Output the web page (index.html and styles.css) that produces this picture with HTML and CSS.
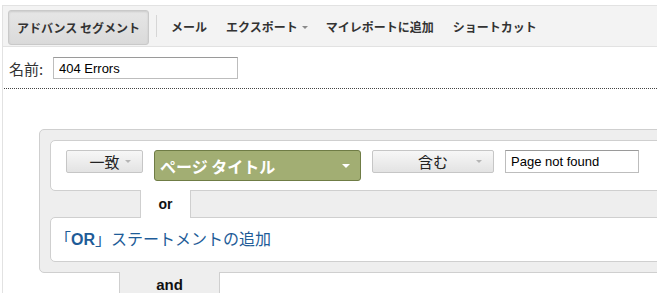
FILE: index.html
```
<!DOCTYPE html>
<html lang="ja">

<head>
  <meta charset="UTF-8">
  <meta name="viewport" content="width=device-width, initial-scale=1.0">
  <title>アドバンス セグメント</title>
  <link rel="stylesheet" href="styles.css">
</head>

<body>

  <div class="page">
    <div class="toolbar">
      <span class="toolbar__button">アドバンス セグメント</span>
      <span class="toolbar__sep"></span>
      <span class="toolbar__item">メール</span>
      <span class="toolbar__item">エクスポート<i class="arrow arrow_gray"></i></span>
      <span class="toolbar__item">マイレポートに追加</span>
      <span class="toolbar__item">ショートカット</span>
    </div>

    <div class="name">
      <label class="name__label" for="segment-name">名前:</label>
      <input class="field name__input" id="segment-name" type="text" value="404 Errors">
    </div>

    <div class="segment">
      <div class="segment__panel">
        <div class="statement">
          <span class="select select_match">
            <span class="select__text">一致</span>
            <i class="arrow arrow_light"></i>
          </span>
          <span class="dimension">
            <span>ページ タイトル</span>
            <i class="arrow arrow_white"></i>
          </span>
          <span class="select select_cond">
            <span class="select__text">含む</span>
            <i class="arrow arrow_light"></i>
          </span>
          <input class="field statement__value" type="text" value="Page not found">
        </div>

        <div class="joiner joiner_or">or</div>

        <div class="statement statement_add">
          <a class="add-link" href="#">「<b>OR</b>」ステートメントの追加</a>
        </div>
      </div>

      <div class="joiner joiner_and">and</div>
    </div>
  </div>

</body>

</html>
```

FILE: styles.css
```
html,
body {
  height: 100%;
}

body {
  margin: 0;
  overflow: hidden;
  background-color: #fff;
  font-family: "Noto Sans CJK JP", "Liberation Sans", sans-serif;
  color: #333;
}

.page {
  margin: 5px 0 0 2px;
  border-top: 1px solid #e2e2e2;
  border-left: 1px solid #e2e2e2;
  height: 287px;
  overflow: hidden;
}

/* toolbar */

.toolbar {
  display: flex;
  align-items: center;
  height: 40px;
  background-color: #f3f3f3;
  border-bottom: 1px solid #e2e2e2;
}

.toolbar__button {
  display: flex;
  align-items: center;
  justify-content: center;
  box-sizing: border-box;
  width: 141px;
  height: 35px;
  margin: 4px 0 0 5px;
  align-self: flex-start;
  border: 1px solid #c9c9c9;
  border-radius: 3px;
  background-image: linear-gradient(#e6e6e6, #dadada);
  box-shadow: inset 0 1px 2px rgba(0, 0, 0, 0.12);
  font-size: 12px;
  font-weight: bold;
  color: #333;
}

.toolbar__sep {
  width: 1px;
  height: 22px;
  margin: 0 14px 0 7px;
  background-color: #d6d6d6;
}

.toolbar__item {
  display: flex;
  align-items: center;
  gap: 4px;
  padding: 0 9px 0 0;
  margin-right: 10px;
  font-size: 12px;
  font-weight: bold;
  color: #333;
}

/* arrows */

.arrow {
  display: inline-block;
  width: 0;
  height: 0;
  border-left: 3px solid transparent;
  border-right: 3px solid transparent;
  border-top: 3px solid #999;
}

.arrow_gray {
  border-top-color: #8a8a8a;
  margin-top: 2px;
  margin-right: -1px;
}

.arrow_light {
  border-top-color: #b5b5b5;
}

.arrow_white {
  border-left-width: 4px;
  border-right-width: 4px;
  border-top: 4px solid #fff;
}

/* name */

.name {
  display: flex;
  align-items: center;
  padding: 10px 0 9px 9px;
  margin-left: -3px;
  border-bottom: 1px dotted #444;
}

.name__label {
  width: 44px;
  font-size: 15px;
  color: #333;
}

.field {
  box-sizing: border-box;
  height: 22px;
  margin: 0;
  padding: 0 5px;
  border: 1px solid #bdbdbd;
  border-top-color: #9a9a9a;
  font-family: "Liberation Sans", Arial, sans-serif;
  font-size: 13px;
  color: #000;
  background-color: #fff;
}

.name__input {
  width: 185px;
}

/* segment builder */

.segment {
  width: 640px;
  margin: 40px 0 0 36px;
}

.segment__panel {
  padding: 10px 0 10px 10px;
  background-color: #eee;
  border: 1px solid #cfcfcf;
  border-radius: 5px;
}

.statement {
  display: flex;
  align-items: flex-start;
  gap: 11px;
  padding: 9px 15px;
  background-color: #fff;
  border: 1px solid #cfcfcf;
  border-radius: 5px;
}

.select {
  display: grid;
  grid-template-columns: 1fr auto 1fr;
  align-items: center;
  box-sizing: border-box;
  height: 23px;
  border: 1px solid #c6c6c6;
  border-radius: 2px;
  background-image: linear-gradient(#f7f7f7, #e3e3e3);
  font-size: 15px;
  color: #222;
}

.select .select__text {
  grid-column: 2;
}

.select .arrow {
  grid-column: 3;
  justify-self: end;
  margin-right: 11px;
}

.select_match {
  width: 77px;
}

.select_cond {
  width: 122px;
}

.dimension {
  display: flex;
  align-items: center;
  justify-content: space-between;
  box-sizing: border-box;
  width: 207px;
  height: 31px;
  padding: 0 10px 0 5px;
  border: 1px solid #6f7c45;
  border-radius: 3px;
  background-color: #a2ae73;
  font-size: 16px;
  font-weight: bold;
  color: #fff;
}

.statement__value {
  width: 134px;
  height: 23px;
}

.statement_add {
  padding: 8px 15px 9px 4px;
}

.add-link {
  font-size: 16px;
  line-height: 25px;
  color: #1e5c98;
  text-decoration: none;
}

.add-link b {
  font-family: "Liberation Sans", Arial, sans-serif;
}

.joiner {
  position: relative;
  z-index: 1;
  box-sizing: border-box;
  font-family: "Liberation Sans", Arial, sans-serif;
  font-weight: bold;
  text-align: center;
  color: #111;
}

.joiner_or {
  width: 51px;
  height: 28px;
  margin: -1px 0 -1px 90px;
  padding-top: 6px;
  background-color: #fff;
  border-left: 1px solid #cfcfcf;
  border-right: 1px solid #cfcfcf;
  font-size: 14px;
}

.joiner_and {
  width: 101px;
  height: 22px;
  margin: -1px 0 0 80px;
  padding-top: 4px;
  background-color: #eee;
  border-left: 1px solid #cfcfcf;
  border-right: 1px solid #cfcfcf;
  font-size: 15px;
}
```
